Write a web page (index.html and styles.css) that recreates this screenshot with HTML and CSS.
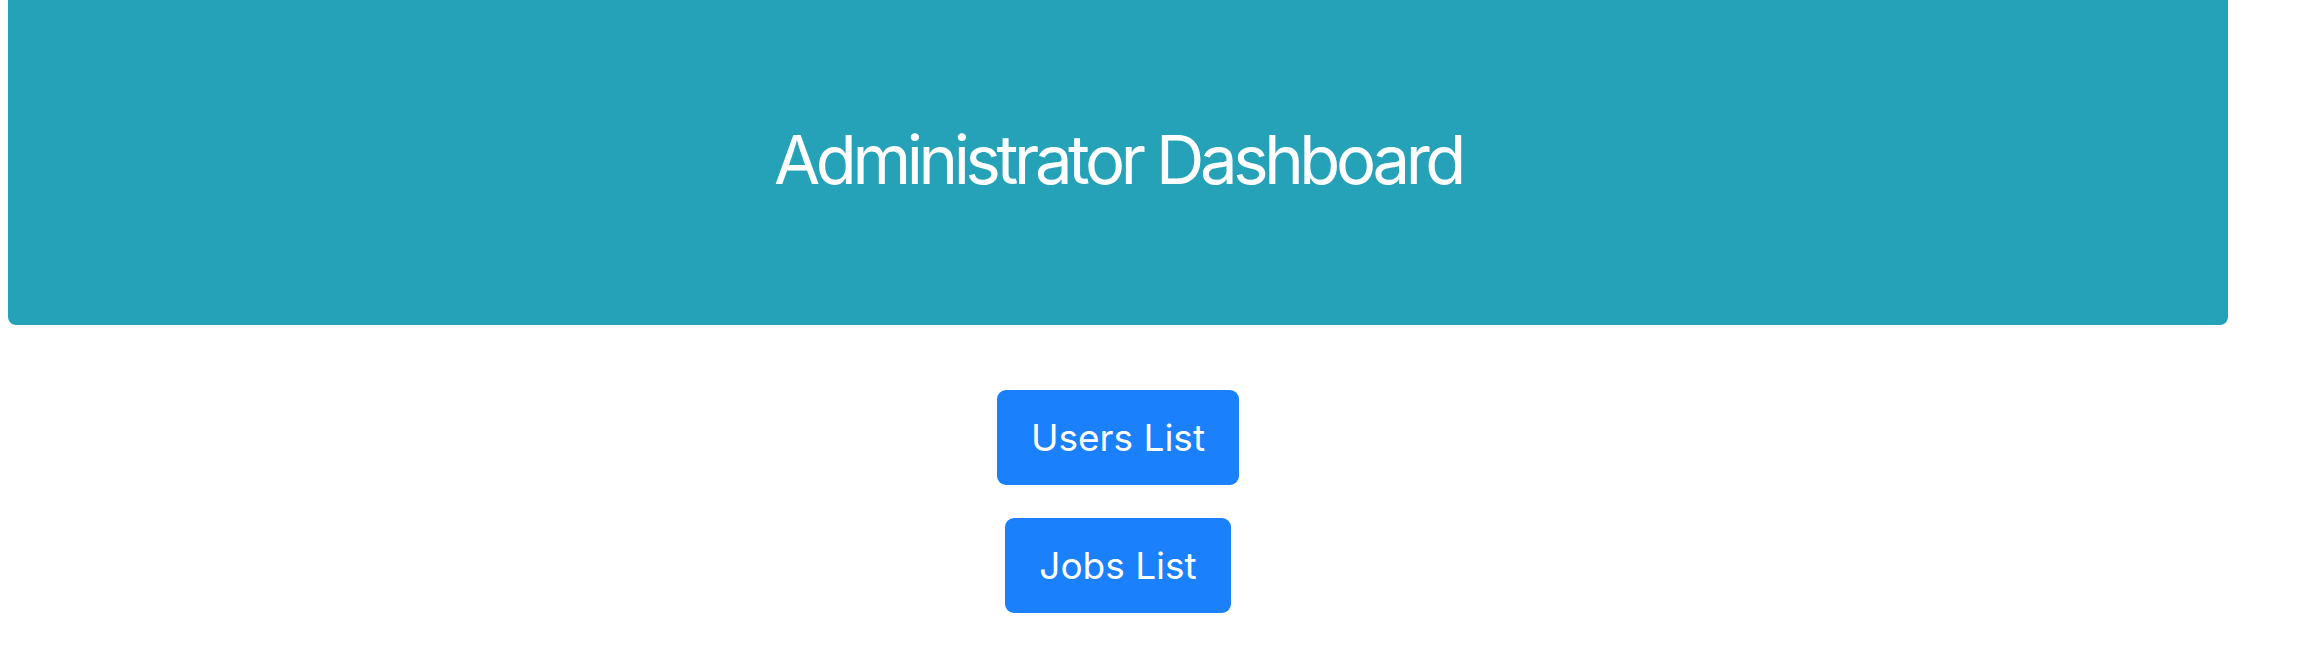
FILE: index.html
```html
<!DOCTYPE html>
<html>
<head>
<meta charset="utf-8">
<link rel="stylesheet" href="styles.css">
</head>
<body>
<div class="page">
  <header class="hero">
    <h1 class="hero-title">Administrator Dashboard</h1>
  </header>
  <nav class="actions">
    <a class="btn" href="#">Users List</a>
    <a class="btn" href="#">Jobs List</a>
  </nav>
</div>
</body>
</html>
```
FILE: styles.css
```css
html, body {
  margin: 0;
  padding: 0;
  background: #ffffff;
}
body {
  font-family: Inter, "Noto Sans", "Liberation Sans", sans-serif;
}
.page {
  width: 2220px;
  margin-left: 8px;
  display: flex;
  flex-direction: column;
  align-items: center;
}
.hero {
  width: 100%;
  height: 325px;
  background: #26a2b8;
  border-radius: 0 0 8px 8px;
  display: flex;
  align-items: center;
  justify-content: center;
}
.hero-title {
  margin: 0;
  color: #ffffff;
  font-weight: 400;
  font-size: 67px;
  letter-spacing: -4.4px;
  line-height: 1;
  padding-bottom: 6px;
}
.actions {
  margin-top: 65px;
  display: flex;
  flex-direction: column;
  align-items: center;
  gap: 33px;
}
.btn {
  display: flex;
  align-items: center;
  justify-content: center;
  height: 95px;
  padding: 0 34px;
  box-sizing: border-box;
  background: #1a80fb;
  color: #ffffff;
  text-decoration: none;
  font-size: 37px;
  border-radius: 9px;
}
```
